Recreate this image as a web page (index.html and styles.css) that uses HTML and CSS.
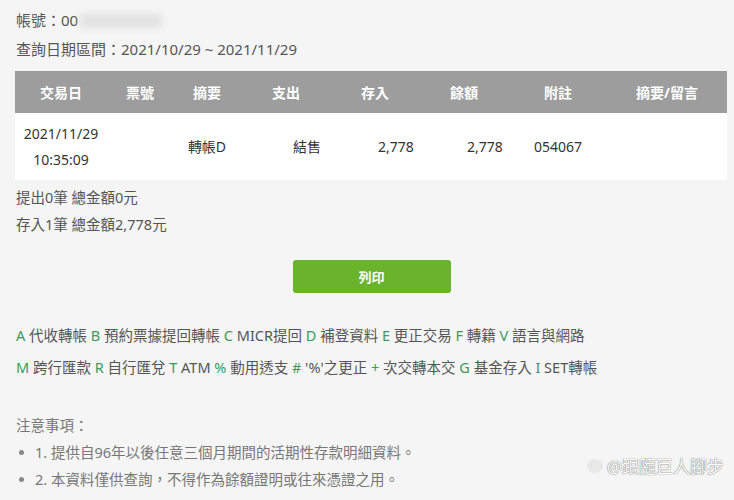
FILE: index.html
```html
<!DOCTYPE html>
<html lang="zh-Hant">
<head>
    <meta charset="UTF-8">
    <meta name="viewport" content="width=device-width, initial-scale=1.0">
    <title>存款明細查詢</title>
    <link rel="stylesheet" href="styles.css">
</head>
<body>

    <div class="page">
        <div class="info">
            <p>帳號：00<span class="masked"></span></p>
            <p>查詢日期區間：2021/10/29 ~ 2021/11/29</p>
        </div>

        <table class="detail">
            <colgroup>
                <col style="width: 92px">
                <col style="width: 66px">
                <col style="width: 68px">
                <col style="width: 90px">
                <col style="width: 88px">
                <col style="width: 90px">
                <col style="width: 98px">
                <col style="width: 120px">
            </colgroup>
            <thead>
                <tr>
                    <th>交易日</th>
                    <th>票號</th>
                    <th>摘要</th>
                    <th>支出</th>
                    <th>存入</th>
                    <th>餘額</th>
                    <th>附註</th>
                    <th>摘要/留言</th>
                </tr>
            </thead>
            <tbody>
                <tr>
                    <td>2021/11/29<br>10:35:09</td>
                    <td></td>
                    <td>轉帳D</td>
                    <td class="shift">結售</td>
                    <td class="shift">2,778</td>
                    <td class="shift">2,778</td>
                    <td>054067</td>
                    <td></td>
                </tr>
            </tbody>
        </table>

        <div class="summary">
            <p>提出0筆 總金額0元</p>
            <p>存入1筆 總金額2,778元</p>
        </div>

        <div class="actions">
            <button class="btn">列印</button>
        </div>

        <div class="legend">
            <p><b>A</b> 代收轉帳 <b>B</b> 預約票據提回轉帳 <b>C</b> MICR提回 <b>D</b> 補登資料 <b>E</b> 更正交易 <b>F</b> 轉籍 <b>V</b> 語言與網路</p>
            <p><b>M</b> 跨行匯款 <b>R</b> 自行匯兌 <b>T</b> ATM <b>%</b> 動用透支 <b>#</b> '%'之更正 <b>+</b> 次交轉本交 <b>G</b> 基金存入 <b>I</b> SET轉帳</p>
        </div>

        <div class="notes">
            <p>注意事項：</p>
            <ul>
                <li>1. 提供自96年以後任意三個月期間的活期性存款明細資料。</li>
                <li>2. 本資料僅供查詢，不得作為餘額證明或往來憑證之用。</li>
            </ul>
        </div>

        <div class="mark"><span class="mark-logo"></span>@跟隨巨人腳步</div>
    </div>

</body>
</html>
```

FILE: styles.css
```css
body {
    margin: 0;
    background: #f5f5f5;
    font-family: "Noto Sans", "Noto Sans CJK TC", sans-serif;
    font-size: 14px;
    color: #555;
}

p {
    margin: 0;
}

.page {
    position: relative;
    padding: 6px 6px 0 15px;
    height: 494px;
    overflow: hidden;
}

.info {
    font-size: 15px;
}

.info p {
    line-height: 29px;
    padding-left: 1px;
}

.masked {
    display: inline-block;
    width: 82px;
    height: 14px;
    margin-left: 2px;
    vertical-align: -2px;
    background: #e2e2e2;
    filter: blur(3px);
}

.detail {
    width: 712px;
    margin-top: 7px;
    border-collapse: collapse;
    table-layout: fixed;
}

.detail th {
    height: 42px;
    background: #9d9d9d;
    color: #fff;
    font-weight: bold;
    font-size: 14px;
    text-align: center;
    padding: 0;
}

.detail td {
    height: 67px;
    background: #fff;
    color: #333;
    text-align: center;
    line-height: 26px;
    padding: 0;
}

.detail td.shift {
    padding-left: 42px;
}

.summary {
    padding: 4px 0 0 1px;
    font-size: 14.5px;
}

.summary p {
    line-height: 27px;
}

.actions {
    display: flex;
    justify-content: center;
    padding-top: 22px;
}

.btn {
    width: 158px;
    height: 33px;
    border: none;
    border-radius: 3px;
    background: #69b42b;
    color: #fff;
    font-family: inherit;
    font-size: 13px;
    font-weight: bold;
    cursor: pointer;
}

.legend {
    padding: 26px 0 0 1px;
    font-size: 14.5px;
    color: #555;
}

.legend p {
    line-height: 32px;
}

.legend b {
    font-weight: normal;
    color: #3d9a5c;
}

.notes {
    padding-top: 28px;
    padding-left: 1px;
    font-size: 14.5px;
    color: #777;
}

.notes p {
    line-height: 28px;
}

.notes ul {
    margin: 0;
    padding: 0;
    list-style: none;
}

.notes li {
    line-height: 27px;
    padding-left: 19px;
    position: relative;
}

.notes li::before {
    content: "";
    position: absolute;
    left: 3px;
    top: 11px;
    width: 5px;
    height: 5px;
    border-radius: 50%;
    background: #888;
}

/* watermark in the lower right corner */
.mark {
    position: absolute;
    right: 10px;
    bottom: 22px;
    display: flex;
    align-items: center;
    gap: 4px;
    font-size: 17px;
    color: #fff;
    text-shadow: 0 0 1px #777, 0 0 1px #777;
}

.mark-logo {
    width: 16px;
    height: 14px;
    border-radius: 50%;
    background: #e8e8e8;
}
```
